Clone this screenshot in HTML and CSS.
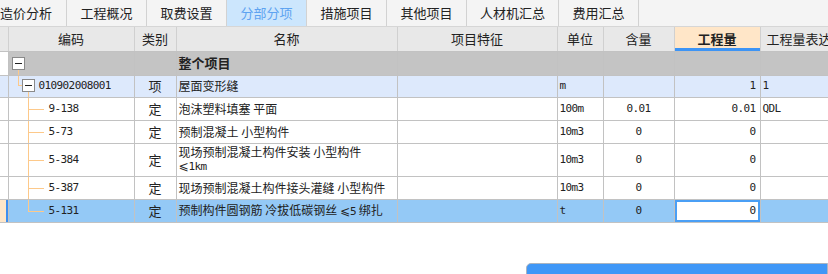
FILE: index.html
```html
<html>
<head>
	<meta charset="utf-8">
	<link rel="stylesheet" href="styles.css">
</head>
<body>
<div class="tabs">
	<div class="tab first">造价分析</div>
	<div class="tab">工程概况</div>
	<div class="tab">取费设置</div>
	<div class="tab active">分部分项</div>
	<div class="tab">措施项目</div>
	<div class="tab">其他项目</div>
	<div class="tab wide">人材机汇总</div>
	<div class="tab">费用汇总</div>
</div>

<table class="grid">
	<colgroup>
		<col class="c-ind"><col class="c-code"><col class="c-type"><col class="c-name">
		<col class="c-feat"><col class="c-unit"><col class="c-qty"><col class="c-amt"><col class="c-expr">
	</colgroup>
	<tr class="head">
		<th></th><th>编码</th><th>类别</th><th>名称</th><th>项目特征</th>
		<th>单位</th><th>含量</th><th class="hot">工程量</th><th class="left">工程量表达式</th>
	</tr>
	<tr class="root">
		<td class="ind"></td>
		<td class="code"><span class="box b1"></span><span class="down"></span></td>
		<td></td><td class="name"><b>整个项目</b></td><td></td><td></td><td></td><td></td><td></td>
	</tr>
	<tr class="item">
		<td class="ind"></td>
		<td class="code lvl1"><span class="elbow"></span><span class="box b2"></span><span class="down2"></span><span class="num">010902008001</span></td>
		<td class="type">项</td><td class="name">屋面变形缝</td><td></td>
		<td class="num">m</td><td></td><td class="num right">1</td><td class="num">1</td>
	</tr>
	<tr class="sub">
		<td class="ind"></td>
		<td class="code lvl2"><span class="vline"></span><span class="hline"></span><span class="num">9-138</span></td>
		<td class="type">定</td><td class="name">泡沫塑料填塞 平面</td><td></td>
		<td class="num">100m</td><td class="num center">0.01</td><td class="num right">0.01</td><td class="num">QDL</td>
	</tr>
	<tr class="sub">
		<td class="ind"></td>
		<td class="code lvl2"><span class="vline"></span><span class="hline"></span><span class="num">5-73</span></td>
		<td class="type">定</td><td class="name">预制混凝土 小型构件</td><td></td>
		<td class="num">10m3</td><td class="num center">0</td><td class="num right">0</td><td></td>
	</tr>
	<tr class="sub tall">
		<td class="ind"></td>
		<td class="code lvl2"><span class="vline"></span><span class="hline"></span><span class="num">5-384</span></td>
		<td class="type">定</td><td class="name">现场预制混凝土构件安装 小型构件<br><span class="le">⩽</span><span class="num">1km</span></td><td></td>
		<td class="num">10m3</td><td class="num center">0</td><td class="num right">0</td><td></td>
	</tr>
	<tr class="sub">
		<td class="ind"></td>
		<td class="code lvl2"><span class="vline"></span><span class="hline"></span><span class="num">5-387</span></td>
		<td class="type">定</td><td class="name">现场预制混凝土构件接头灌缝 小型构件</td><td></td>
		<td class="num">10m3</td><td class="num center">0</td><td class="num right">0</td><td></td>
	</tr>
	<tr class="sub selected">
		<td class="ind"></td>
		<td class="code lvl2 last"><span class="vline"></span><span class="hline"></span><span class="num">5-131</span></td>
		<td class="type">定</td><td class="name">预制构件圆钢筋 冷拔低碳钢丝 <span class="le">⩽</span><span class="num">5</span> 绑扎</td><td></td>
		<td class="num">t</td><td class="num center">0</td><td class="num right editing">0</td><td></td>
	</tr>
</table>

<div class="float-btn"></div>
</body>
</html>
```

FILE: styles.css
```css
html {
	overflow: hidden;
}
body {
	margin: 0;
	width: 828px;
	height: 274px;
	overflow: hidden;
	background: #fff;
	font-family: "Noto Sans CJK SC", "Noto Sans", sans-serif;
	color: #222;
}

.tabs {
	display: flex;
	height: 26px;
	background: #f4f4f4;
	border-bottom: 1px solid #d6d6d6;
	width: 900px;
}
.tab {
	width: 79px;
	border-right: 1px solid #d2d2d2;
	font-size: 13px;
	line-height: 26px;
	text-align: center;
	color: #222;
}
.tab.first {
	width: 80px;
	margin-left: -14px;
}
.tab.wide {
	width: 91px;
}
.tab.active {
	background: #cce6fd;
	color: #5ea3f1;
}

.grid {
	border-collapse: collapse;
	table-layout: fixed;
	width: 880px;
	font-size: 12px;
}
.c-ind { width: 8px; }
.c-code { width: 126px; }
.c-type { width: 42px; }
.c-name { width: 221px; }
.c-feat { width: 160px; }
.c-unit { width: 46px; }
.c-qty { width: 71px; }
.c-amt { width: 86px; }
.c-expr { width: 120px; }

.grid th, .grid td {
	border: 1px solid #c2c2c2;
	padding: 0 2px;
	white-space: nowrap;
	overflow: hidden;
}
.grid th {
	border-top: none;
	height: 24px;
	background: #e8e8e8;
	font-weight: normal;
	font-size: 13px;
	border-color: #d0d0d0;
	border-bottom-color: #c2c2c2;
}
.grid th.hot {
	background: #ffe6c8;
	font-weight: bold;
	box-shadow: inset 0 -3px 0 #3d94f5;
}
.grid th.left {
	text-align: left;
	padding-left: 6px;
}
.grid td {
	height: 23px;
	line-height: 14px;
}
.grid td.ind {
	padding: 0;
	background: #fff;
	border-left: none;
}
.grid th:first-child {
	border-left: none;
}

.root td {
	height: 24px;
	background: #c4c4c4;
}
.grid .item td {
	height: 22px;
	background: #dde9fc;
}
.selected td {
	background: #94c9f6;
}
.selected td.ind {
	background: #fee6c9;
	box-shadow: inset -2px 0 0 #3d8ff0;
}
.grid .tall td {
	height: 33px;
}

.num {
	font-family: "DejaVu Sans Mono", "Liberation Mono", monospace;
	font-size: 11px;
	letter-spacing: -0.6px;
}
.grid td.right {
	text-align: right;
	padding-right: 4px;
}
.grid td.center {
	text-align: center;
}
.grid td.type {
	text-align: center;
	font-size: 13px;
}
.grid td.name {
	padding-left: 2px;
}
.grid td.name b {
	font-size: 13px;
}
.le {
	font-family: "DejaVu Sans", sans-serif;
	font-size: 12px;
}
.grid td.editing {
	background: #fff;
	box-shadow: inset 0 0 0 2px #4a9ff5;
}

/* tree connectors */
.code {
	position: relative;
}
.box {
	position: absolute;
	width: 11px;
	height: 11px;
	border: 1px solid #8a8a8a;
	background: #fff;
}
.box::after {
	content: "";
	position: absolute;
	left: 2px;
	top: 5px;
	width: 7px;
	height: 1px;
	background: #222;
}
.b1 {
	left: 3px;
	top: 5px;
}
.b2 {
	left: 13px;
	top: 3px;
}
.down {
	position: absolute;
	left: 9px;
	top: 18px;
	bottom: -1px;
	width: 1px;
	background: #fdc98a;
}
.elbow {
	position: absolute;
	left: 9px;
	top: -1px;
	width: 4px;
	height: 10px;
	border-left: 1px solid #fdc98a;
	border-bottom: 1px solid #fdc98a;
}
.down2 {
	position: absolute;
	left: 19px;
	top: 16px;
	bottom: -1px;
	width: 1px;
	background: #fdc98a;
}
.lvl1 .num {
	padding-left: 28px;
}
.vline {
	position: absolute;
	left: 19px;
	top: -1px;
	bottom: -1px;
	width: 1px;
	background: #fdc98a;
}
.last .vline {
	bottom: 50%;
}
.hline {
	position: absolute;
	left: 19px;
	top: 50%;
	width: 16px;
	height: 1px;
	background: #fdc98a;
}
.lvl2 .num {
	padding-left: 38px;
}

.float-btn {
	margin: 40px 0 0 526px;
	height: 30px;
	background: #3f97f7;
	border: 1px solid #aab4c0;
	border-radius: 5px 0 0 0;
}
```
